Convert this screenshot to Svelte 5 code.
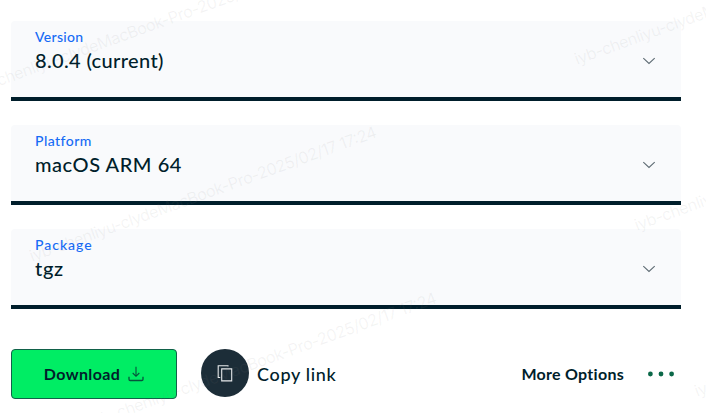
<script>
  const fields = [
    { label: 'Version', value: '8.0.4 (current)', labelGap: 0.32, valueGap: 0.36 },
    { label: 'Platform', value: 'macOS ARM 64', labelGap: 0.46, valueGap: 0.55 },
    { label: 'Package', value: 'tgz', labelGap: 0.98, valueGap: 0.7 }
  ];
  const stamp = 'iyb-chenliyu-clydeMacBook-Pro-2025/02/17 17:24';
  const marks = [[-28, 96], [32, 262], [92, 428], [577, 65], [637, 231], [697, 397]];
</script>

<main>
  <div class="fields">
    {#each fields as field}
      <div class="field" role="button" tabindex="-1">
        <div class="copy">
          <span class="label" style:letter-spacing="{field.labelGap}px">{field.label}</span>
          <span class="value" style:letter-spacing="{field.valueGap}px">{field.value}</span>
        </div>
        <svg class="chevron" width="14" height="8" viewBox="0 0 14 8"><path d="M1.3 1.2 7 6.4l5.7-5.2" /></svg>
      </div>
    {/each}
  </div>
  <div class="actions">
    <button class="download">
      <span>Download</span>
      <svg width="16" height="16" viewBox="0 0 16 16"><path d="M8 .8v9.4M4.7 7 8 10.3 11.3 7" /><path class="tray" d="M1 10.8v2.5q0 1.2 1.2 1.2h11.6q1.2 0 1.2-1.2v-2.5" /></svg>
    </button>
    <button class="copylink">
      <span class="disc">
        <svg width="16" height="17" viewBox="0 0 16 17"><path d="M11 1.5V.8H1.2v11.7h2" /><path d="M4.7 3.9h10v12h-10z" /></svg>
      </span>
      <span class="linktext">Copy link</span>
    </button>
    <button class="more">
      <span>More Options</span>
      <svg width="28" height="6" viewBox="0 0 28 6"><circle cx="3.4" cy="3" r="2.4" /><circle cx="14" cy="3" r="2.4" /><circle cx="24.6" cy="3" r="2.4" /></svg>
    </button>
  </div>
  <svg class="watermark" width="706" height="413" aria-hidden="true">
    {#each marks as [x, y]}
      <text transform="translate({x} {y}) rotate(-19.9)" textLength="368">{stamp}</text>
    {/each}
  </svg>
</main>

<style>
  :global(body) { background: #fff; }
  main {
    position: relative;
    box-sizing: border-box;
    width: 706px;
    height: 413px;
    padding: 21px 25px 0 11px;
    overflow: hidden;
    color: #001e2b;
    font-family: Lato, "Open Sans", sans-serif;
  }
  .fields { display: flex; flex-direction: column; gap: 24px; }
  .field {
    display: flex;
    box-sizing: border-box;
    justify-content: space-between;
    height: 80px;
    padding: 0 25px 0 24px;
    background: #f9fafc;
    border-bottom: 4px solid #001e2b;
    border-radius: 4px 4px 0 0;
  }
  .copy { display: flex; flex-direction: column; padding-top: 6px; }
  .label { color: #166bf5; font-size: 14px; font-weight: 500; line-height: 20px; }
  .value { font-size: 20px; font-weight: 500; line-height: 26px; }
  .chevron { margin-top: 36px; }
  svg { fill: none; }
  .chevron path { stroke: #5e6b73; stroke-width: 1.1; }
  .actions { display: flex; align-items: flex-start; margin-top: 40px; }
  button { padding: 0; border: 0; background: none; color: inherit; font: inherit; }
  .download {
    display: flex;
    box-sizing: border-box;
    align-items: center;
    justify-content: center;
    gap: 8px;
    width: 166px;
    height: 50px;
    background: #00ed64;
    border: 1px solid #116149;
    border-radius: 4px;
    font-size: 16px;
    font-weight: 700;
    letter-spacing: 0.4px;
  }
  .download span, .more span { padding-bottom: 2px; }
  .download path { stroke: #07533b; stroke-width: 1.1; }
  .download .tray { stroke-width: 1.3; }
  .copylink { display: flex; align-items: center; gap: 8px; margin-left: 24px; height: 48px; }
  .disc {
    display: flex;
    align-items: center;
    justify-content: center;
    width: 48px;
    height: 48px;
    background: #1c2d38;
    border-radius: 50%;
  }
  .disc path { stroke: #e7eaec; stroke-width: 1.1; }
  .linktext { padding-top: 2px; font-size: 18px; font-weight: 500; letter-spacing: 0.68px; }
  .more { display: flex; align-items: center; gap: 23px; height: 50px; margin-left: auto; margin-right: 6px; font-size: 16px; font-weight: 700; letter-spacing: 0.28px; }
  .watermark { position: absolute; inset: 0; pointer-events: none; }
  .more circle { fill: #0b6848; }
  .watermark text { fill: rgb(128 128 128 / 0.09); font: 16.3px Inter, sans-serif; }
</style>
